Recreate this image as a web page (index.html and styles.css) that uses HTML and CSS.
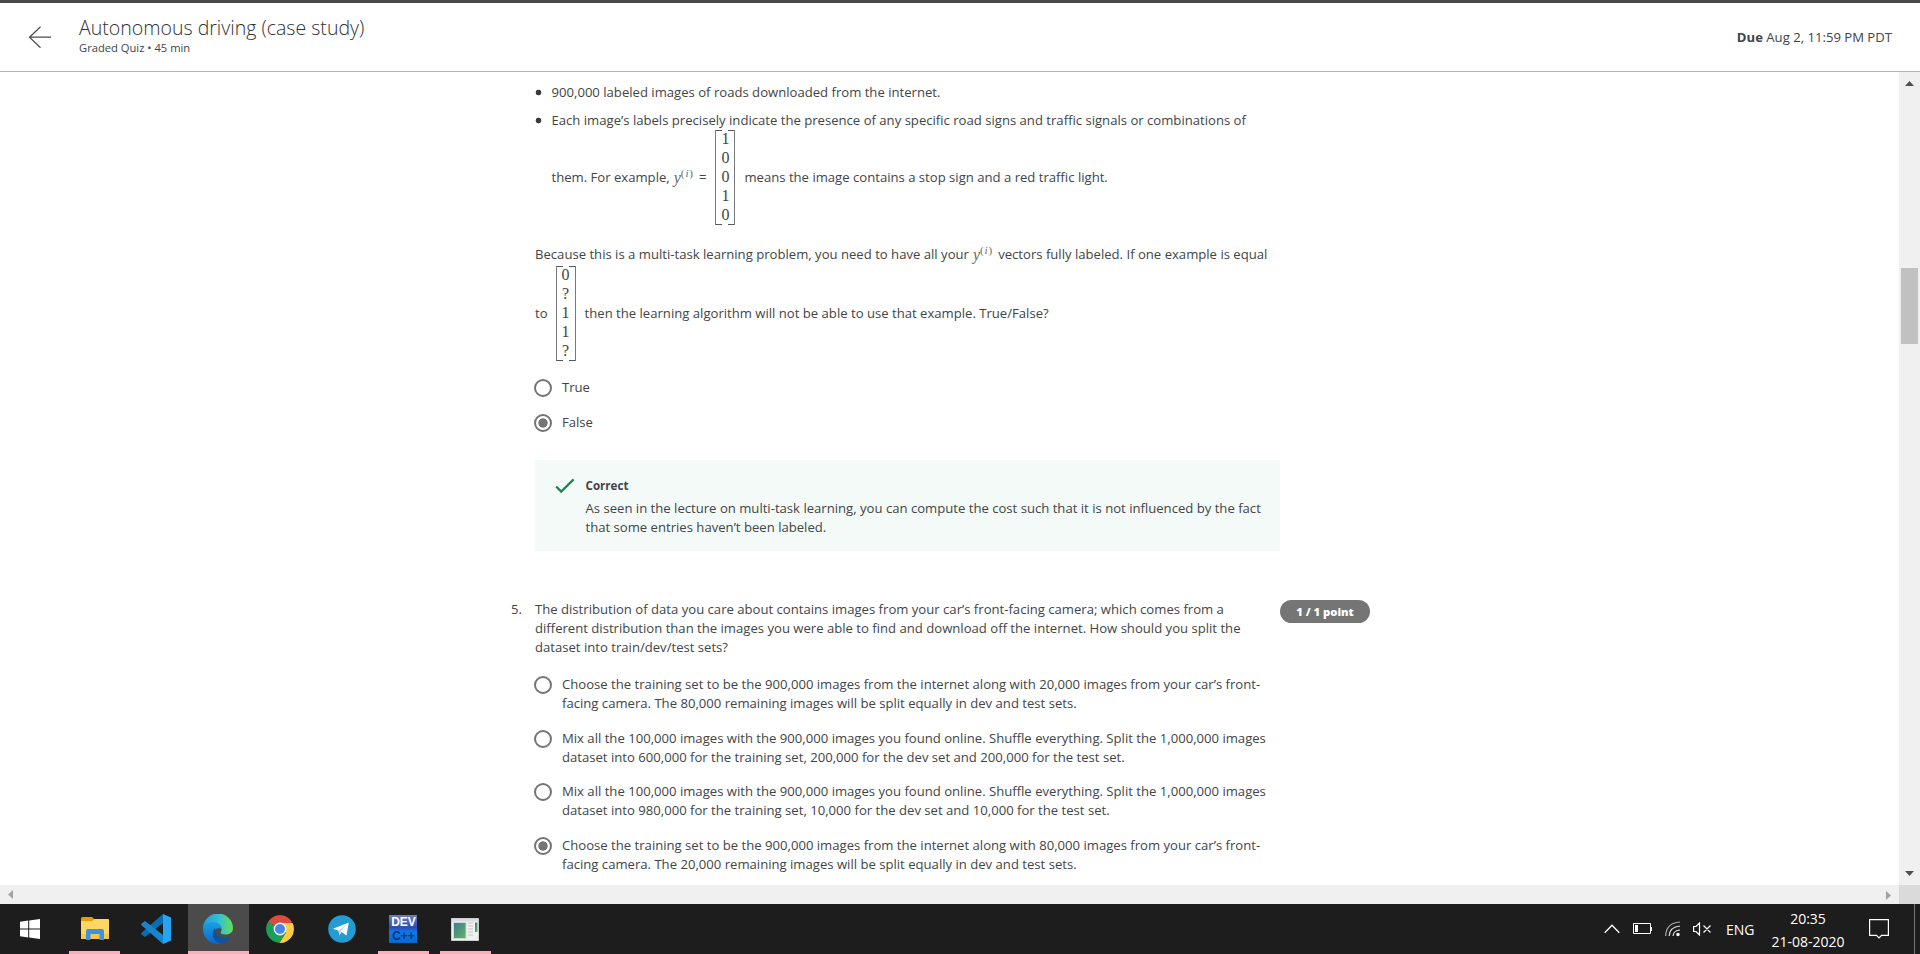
FILE: index.html
```html
<!DOCTYPE html>
<html lang="en">
<head>
<meta charset="utf-8">
<title>Autonomous driving (case study)</title>
<link rel="stylesheet" href="styles.css">
</head>
<body>
<header class="header">
  <svg class="back" width="24" height="24" viewBox="0 0 24 24"><path d="M23 11.2H1.5M12.500 .8 1.500 11.200 12.500 21.800" fill="none" stroke="#4a4a55" stroke-width="1.200"/></svg>
  <div class="heading">
    <h1 class="title">Autonomous driving (case study)</h1>
    <p class="subtitle">Graded Quiz • 45 min</p>
  </div>
  <p class="due"><b>Due</b> Aug 2, 11:59 PM PDT</p>
</header>
<div class="viewport">
  <main class="page">
    <section class="question">
      <ul class="facts">
        <li>900,000 labeled images of roads downloaded from the internet.</li>
        <li>Each image’s labels precisely indicate the presence of any specific road signs and traffic signals or combinations of
          <div class="math-line">
            <span>them. For example,</span><span class="math">y<sup>(<i>i</i>)</sup></span><span class="eq">=</span>
            <span class="matrix"><span>1</span><span>0</span><span>0</span><span>1</span><span>0</span></span>
            <span>means the image contains a stop sign and a red traffic light.</span>
          </div>
        </li>
      </ul>
      <div class="prompt">
        <div class="text-line"><span>Because this is a multi-task learning problem, you need to have all your</span><span class="math">y<sup>(<i>i</i>)</sup></span><span class="after">vectors fully labeled. If one example is equal</span></div>
        <div class="math-line">
          <span>to</span>
          <span class="matrix matrix-b"><span>0</span><span>?</span><span>1</span><span>1</span><span>?</span></span>
          <span>then the learning algorithm will not be able to use that example. True/False?</span>
        </div>
      </div>
      <div class="options short">
        <div class="option"><span class="radio"></span><span>True</span></div>
        <div class="option"><span class="radio checked"></span><span>False</span></div>
      </div>
      <div class="feedback">
        <svg class="tick" width="20" height="16" viewBox="0 0 20 16"><path d="M1.200 8.400 6.200 13.600 18.600 1.400" fill="none" stroke="#1f8354" stroke-width="2.200"/></svg>
        <div>
          <b class="verdict">Correct</b>
          <p>As seen in the lecture on multi-task learning, you can compute the cost such that it is not influenced by the fact<br>that some entries haven’t been labeled.</p>
        </div>
      </div>
    </section>
    <section class="question next">
      <span class="number">5.</span>
      <div class="body">
        <p>The distribution of data you care about contains images from your car’s front-facing camera; which comes from a<br>different distribution than the images you were able to find and download off the internet. How should you split the<br>dataset into train/dev/test sets?</p>
        <div class="options long">
          <div class="option"><span class="radio"></span><span>Choose the training set to be the 900,000 images from the internet along with 20,000 images from your car’s front-<br>facing camera. The 80,000 remaining images will be split equally in dev and test sets.</span></div>
          <div class="option"><span class="radio"></span><span>Mix all the 100,000 images with the 900,000 images you found online. Shuffle everything. Split the 1,000,000 images<br>dataset into 600,000 for the training set, 200,000 for the dev set and 200,000 for the test set.</span></div>
          <div class="option"><span class="radio"></span><span>Mix all the 100,000 images with the 900,000 images you found online. Shuffle everything. Split the 1,000,000 images<br>dataset into 980,000 for the training set, 10,000 for the dev set and 10,000 for the test set.</span></div>
          <div class="option"><span class="radio checked"></span><span>Choose the training set to be the 900,000 images from the internet along with 80,000 images from your car’s front-<br>facing camera. The 20,000 remaining images will be split equally in dev and test sets.</span></div>
        </div>
      </div>
      <span class="points">1 / 1 point</span>
    </section>
  </main>
  <div class="vscroll">
    <svg width="9" height="5" viewBox="0 0 9 5"><path d="M0 5 4.500 0 9 5z" fill="#505050"/></svg>
    <div class="thumb"></div>
    <svg class="down" width="9" height="5" viewBox="0 0 9 5"><path d="M0 0H9L4.500 5z" fill="#505050"/></svg>
  </div>
</div>
<div class="hscroll">
  <svg width="5" height="9" viewBox="0 0 5 9"><path d="M5 0V9L0 4.500z" fill="#a3a3a3"/></svg>
  <svg class="right" width="5" height="9" viewBox="0 0 5 9"><path d="M0 0V9L5 4.500z" fill="#a3a3a3"/></svg>
  <div class="corner"></div>
</div>
<footer class="taskbar">
  <div class="task start"><svg width="20" height="20" viewBox="0 0 20 20"><path d="M0 2.800 8.200 1.500V9.400H0zM9.200 1.400 20 0V9.400H9.200zM0 10.400H8.200V18.500L0 17.300zM9.200 10.400H20V20L9.200 18.600z" fill="#fff"/></svg></div>
  <div class="task open"><svg width="28" height="24" viewBox="0 0 28 24">
    <path d="M0 1.500Q0 0 1.500 0H11l3 3-3 3H0z" fill="#e0a000"/><path d="M0 4H11L13.500 2H27q1 0 1 1V21q0 1-1 1H1q-1 0-1-1z" fill="#ffd664"/><path d="M0 17H28V21q0 1-1 1H1q-1 0-1-1z" fill="#f9c84a"/><path d="M5 23V14q0-2 2-2H21q2 0 2 2v9H18.500V17H9.500v6z" fill="#3a95e0"/></svg></div>
  <div class="task"><svg width="30" height="30" viewBox="0 0 30 30">
    <path d="M22 0V9L4 23 .6 20.600Q-.3 19.600 .8 18.400z" fill="#0a6db4"/><path d="M22 30V21L4 7 .6 9.400Q-.3 10.400 .8 11.600z" fill="#1485cf"/><path d="M22 0 30 3.500V26.500L22 30z" fill="#25a4f3"/></svg></div>
  <div class="task active"><svg width="30" height="30" viewBox="0 0 30 30">
    <defs><linearGradient id="ea" x1="0" x2="1"><stop offset="0" stop-color="#219bdc"/><stop offset=".55" stop-color="#35c1d0"/><stop offset="1" stop-color="#65e052"/></linearGradient><linearGradient id="eb" x1="0" y1="0" x2="0" y2="1"><stop offset="0" stop-color="#1ba0e4"/><stop offset="1" stop-color="#0b67c9"/></linearGradient></defs>
    <path d="M0 15A15 15 0 0 1 30 14C30 19 26 20.500 22.500 20.500 18 20.500 17 19 18 17.500 20 14 17 9 10 9 5 9 1 12 0 15z" fill="url(#ea)"/><path d="M0 15C1 10 5 8 9.500 8 15 8 19 11 18.500 15 15 13 10 16 11 20.500 12 26 17 29 20.500 28.900 10 33 0 25 0 15z" fill="url(#eb)"/><path d="M12 14C7 20 11 29 18.500 29.600 23 29 26.500 26 28 23 21 26 12.500 23 12 14z" fill="#1052a0"/></svg></div>
  <div class="task"><svg width="28" height="28" viewBox="0 0 28 28">
    <path d="M14 14 1.900 7A14 14 0 0 1 26.100 7z" fill="#de4a3c"/><path d="M14 14 2.200 6.600A14 14 0 0 0 13.500 28L20 17.500z" fill="#1c9d58"/><path d="M13.500 28 20 17.500 14 14 14 8H26.600A14 14 0 0 1 13.500 28z" fill="#fdcd41"/><circle cx="14" cy="14" r="6.400" fill="#f4f4f4"/><circle cx="14" cy="14" r="5" fill="#4688f0"/></svg></div>
  <div class="task"><svg width="28" height="28" viewBox="0 0 28 28">
    <circle cx="14" cy="14" r="13.800" fill="#239bd3"/><path d="M5 13.800 20.800 7.600 18.500 20.500 13.500 17 11.500 20.500 10.500 15.800z" fill="#fff"/><path d="M10.500 15.800 18.500 9.800 12.800 16.600 11.500 20.500z" fill="#bcd8e8"/></svg></div>
  <div class="task open"><div class="dev"><span>DEV</span><span class="cpp">C++</span></div></div>
  <div class="task open"><svg width="28" height="23" viewBox="0 0 28 23">
    <defs><linearGradient id="wa" x1="0" y1="0" x2="1" y2="1"><stop offset="0" stop-color="#397d9d"/><stop offset="1" stop-color="#67b357"/></linearGradient></defs>
    <path d="M.5.500H27.500V22.500H.5z" fill="#f0f0f0" stroke="#c9cdd0"/><path d="M1 1H27V3.500H1z" fill="#d5dde2"/><path d="M2.500 4.500H15V20.500H2.500z" fill="url(#wa)" stroke="#d0d8d8"/><path d="M17 5H22M17 8H22M17 11H22M17 14H22M17 17H22" stroke="#c6c6c6"/><path d="M24 4.500H26.500V14H24z" fill="url(#wa)"/></svg></div>
  <div class="tray">
    <svg class="chevron" width="16" height="10" viewBox="0 0 16 10"><path d="M.7 8.700 8 1.300 15.300 8.700" fill="none" stroke="#fff" stroke-width="1.300"/></svg>
    <svg class="battery" width="20" height="12" viewBox="0 0 20 12"><path d="M.5.500H17.500V10.500H.5zM18.500 4V8" fill="none" stroke="#fff"/><path d="M2 2H5V9H2z" fill="#fff"/></svg>
    <svg class="wifi" width="16" height="16" viewBox="0 0 16 16"><g fill="none" stroke="#aaa" stroke-width="1.200"><path d="M.7 15Q1 2 15 1"/><path d="M4.200 15Q4.500 6 15 5" stroke="#ddd"/><path d="M8 15Q8.500 9.500 15 9" stroke="#ddd"/></g><circle cx="13" cy="13.500" r="1.700" fill="#fff"/></svg>
    <svg class="sound" width="19" height="14" viewBox="0 0 19 14"><path d="M.6 4.500H3L6.500 1V13L3 9.500H.6zM10.500 3.500 17.500 10.500M17.500 3.500 10.500 10.500" fill="none" stroke="#fff" stroke-width="1.200"/></svg>
    <span class="lang">ENG</span>
    <div class="clock"><span>20:35</span><span>21-08-2020</span></div>
    <svg class="notes" width="20" height="20" viewBox="0 0 20 20"><path d="M.6.600H19.400V16.400H12.500L10 19 7.500 16.400H.6z" fill="none" stroke="#fff" stroke-width="1.200"/></svg>
    <div class="peek"></div>
  </div>
</footer>
</body>
</html>
```
FILE: styles.css
```css
* { box-sizing: border-box; }
body { margin: 0; width: 1920px; height: 954px; overflow: hidden; display: flex; flex-direction: column; background: #fff; color: #424547; font: 13.120px/19px "Open Sans", sans-serif; }
p, h1, ul { margin: 0; padding: 0; }
svg { display: block; flex: none; }
.header { height: 72px; flex: none; display: flex; align-items: flex-start; border-top: 3px solid #4b494b; border-bottom: 1px solid #b5b5b5; padding-right: 28px; }
.back { margin: 23px 0 0 28px; }
.heading { margin: 11px 0 0 27px; }
.title { font-size: 19.550px; line-height: 28px; font-weight: 300; white-space: nowrap; color: #2f3234; }
.subtitle { font-size: 11.200px; line-height: 14px; margin-top: -1px; }
.due { margin: 25px 0 0 auto; }
.viewport { flex: 1; min-height: 0; display: flex; }
.page { flex: 1; overflow: hidden; padding: 11px 0 0 535px; white-space: nowrap; }
.facts { list-style: none; }
.facts li { padding-left: 16.500px; background: radial-gradient(circle at 3.500px 9.500px, #373a3c 2.500px, transparent 3.200px); }
.facts li + li { margin-top: 9px; }
.math-line { display: flex; align-items: center; height: 95px; }
.math { font: italic 16px/19px "Liberation Serif", serif; color: #666; margin-left: 4px; }
.math sup { font-size: 11px; font-style: normal; line-height: 0; vertical-align: 6px; letter-spacing: .9px; }
.eq { margin-left: 5px; }
.matrix { width: 20px; height: 95px; margin: 0 9px; padding-bottom: 2px; display: flex; flex-direction: column; align-items: center; justify-content: center; font: 16px/19px "Liberation Serif", serif; background: linear-gradient(#55585a, #55585a) 0 0/6px 1px no-repeat, linear-gradient(#55585a, #55585a) 100% 0/6px 1px no-repeat, linear-gradient(#55585a, #55585a) 0 100%/6px 1px no-repeat, linear-gradient(#55585a, #55585a) 100% 100%/6px 1px no-repeat; border: solid #77797b; border-width: 0 1px; }
.matrix-b { margin: 0 9px 0 8px; }
.prompt { margin-top: 20px; }
.text-line { height: 21px; display: flex; }
.after { margin-left: 5px; }
.options { display: flex; flex-direction: column; }
.option { display: flex; margin-left: -1px; }
.radio { flex: none; width: 18px; height: 18px; border: 2px solid #757575; border-radius: 50%; margin: 1px 10px 0 0; }
.checked { background: radial-gradient(circle, #757575 4.300px, transparent 5px); }
.short { margin-top: 17px; gap: 16px; }
.feedback { width: 745px; height: 91px; margin-top: 28px; background: #f3faf8; padding: 16px 0 0 20px; display: flex; gap: 10.500px; }
.tick { margin-top: 2px; }
.verdict { font-size: 11.600px; display: block; margin-bottom: 4px; }
.next { display: flex; margin: 49px 0 0 -24px; }
.number { width: 24px; }
.body { width: 745px; }
.long { margin-top: 18px; gap: 15.600px; }
.points { width: 90px; height: 23px; border-radius: 12px; background: #757575; color: #fff; font-size: 11.200px; font-weight: 800; line-height: 24px; text-align: center; }
.vscroll { width: 21px; background: #f0f0f0; display: flex; flex-direction: column; align-items: center; padding-top: 9px; }
.thumb { width: 17px; height: 76px; margin-top: 182px; background: #c1c1c1; }
.down { margin: auto 0 9px; }
.hscroll { height: 19px; flex: none; background: #f0f0f0; display: flex; align-items: center; padding-left: 8px; }
.right { margin: 2px 8px 0 auto; }
.corner { width: 21px; height: 19px; background: #dadada; }
.taskbar { height: 50px; flex: none; display: flex; background: #1d1d1d; color: #fff; }
.task { width: 51px; height: 50px; margin-right: 10.800px; display: flex; align-items: center; justify-content: center; border-bottom: 3px solid transparent; padding-top: 3px; }
.start { width: 60px; margin-right: 9px; }
.open { border-color: #ffaeb9; }
.active { width: 61px; margin: 0 5.800px 0 -5px; background: #4b4b4b; border-color: #ffaeb9; }
.dev { width: 28px; height: 28px; background: linear-gradient(#707bbc, #2f4cb5 45%, #0a7be8 60%, #0766d0); font: bold 12px/14px "Liberation Sans", sans-serif; display: grid; grid-template-rows: 14px 14px; justify-items: center; }
.cpp { color: #0c3278; }
.tray { margin-left: auto; display: flex; align-items: center; white-space: nowrap; font: 14px/23px "Open Sans", sans-serif; }
.battery { margin-left: 13px; }
.wifi { margin-left: 12px; }
.sound { margin-left: 12px; }
.lang { margin-left: 14px; width: 29px; }
.clock { width: 78px; margin: 2px 0 0 14px; display: flex; flex-direction: column; align-items: center; }
.notes { margin-left: 22px; }
.peek { width: 6px; height: 50px; margin-left: 25px; border-left: 1px solid #777; }
```
